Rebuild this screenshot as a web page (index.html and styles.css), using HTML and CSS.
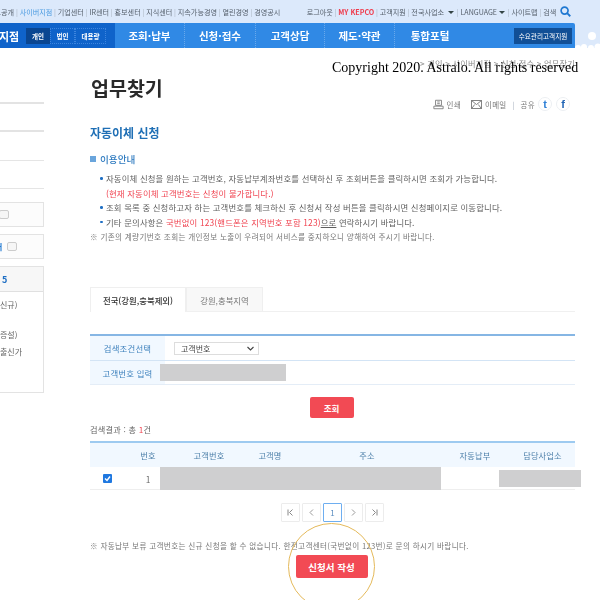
FILE: index.html
```html
<!DOCTYPE html>
<html lang="ko">
<head>
<meta charset="utf-8">
<title>업무찾기</title>
<link rel="stylesheet" href="styles.css">
</head>
<body>
<div class="page">
  <header class="topbar">
    <div class="toplinks left">
      <span>정보공개</span><i>|</i><span class="cur">사이버지점</span><i>|</i><span>기업센터</span><i>|</i><span>IR센터</span><i>|</i><span>홍보센터</span><i>|</i><span>지식센터</span><i>|</i><span>지속가능경영</span><i>|</i><span>열린경영</span><i>|</i><span>경영공시</span>
    </div>
    <div class="toplinks right">
      <span>로그아웃</span><i>|</i><span class="my">MY KEPCO</span><i>|</i><span>고객지원</span><i>|</i><span>전국사업소 <b class="caret"></b></span><i>|</i><span>LANGUAGE<b class="caret"></b></span><i>|</i><span>사이트맵</span><i>|</i><span>검색</span>
      <svg class="search" viewBox="0 0 12 12" width="11" height="11"><circle cx="5" cy="5" r="3.8" fill="none" stroke="#1f78d1" stroke-width="1.8"/><path d="M7.8 7.8L11.2 11.2" stroke="#1f78d1" stroke-width="2"/></svg>
    </div>
  </header>

  <nav class="navrow">
    <div class="navbar">
      <div class="navside">
        <strong class="branch">지점</strong>
        <div class="seg"><span class="on">개인</span><span>법인</span><span class="wide">대용량</span></div>
      </div>
      <a class="navitem w70">조회·납부</a>
      <a class="navitem w71">신청·접수</a>
      <a class="navitem w69">고객상담</a>
      <a class="navitem w70">제도·약관</a>
      <a class="navitem w70 last">통합포털</a>
      <span class="support">수요관리고객지원</span>
    </div>
    <svg class="cloud" width="25" height="25" viewBox="0 0 25 25"><circle cx="17" cy="13" r="4" fill="#fff"/><circle cx="3" cy="25" r="3" fill="#fff"/><circle cx="9" cy="24" r="3" fill="#fff"/><circle cx="16" cy="25" r="3" fill="#fff"/><circle cx="23" cy="24" r="3.5" fill="#fff"/></svg>
  </nav>

  <div class="body">
    <aside class="side">
      <div class="srow first"></div>
      <div class="srow"></div>
      <div class="srow"></div>
      <div class="srow"></div>
      <div class="sbox"><span class="chk"></span></div>
      <div class="sbox"><em>터</em><span class="chk"></span></div>
      <div class="smenu">
        <div class="shead">5</div>
        <p class="m1">신규)</p>
        <p class="m2">증설)</p>
        <p class="m3">출신가</p>
      </div>
    </aside>

    <main class="main">
      <div class="crumbs">&gt; 개인 &gt; 사이버지점 &gt; 신청·접수 &gt; 업무찾기</div>
      <h1>업무찾기</h1>
      <div class="tools">
        <svg width="11" height="11" viewBox="0 0 13 12"><path d="M3 1h7v6H3zM1 8h11v3H1zM5 3h3M5 5h3" fill="none" stroke="#777"/></svg><span class="tt">인쇄</span>
        <svg class="t2" width="11" height="9" viewBox="0 0 12 10"><rect x=".5" y=".5" width="11" height="9" fill="none" stroke="#777"/><path d="M1 1l5 4 5-4M1 9l3-4M11 9L8 5" fill="none" stroke="#777"/></svg><span class="tt">이메일</span>
        <i>|</i><span class="tt">공유</span>
        <span class="sns tw">t</span><span class="sns fb">f</span>
      </div>
      <h2>자동이체 신청</h2>
      <h3><b class="sq"></b>이용안내</h3>
      <ul class="guide">
        <li>자동이체 신청을 원하는 고객번호, 자동납부계좌번호를 선택하신 후 조회버튼을 클릭하시면 조회가 가능합니다.<br><span class="red">(현재 자동이체 고객번호는 신청이 불가합니다.)</span></li>
        <li>조회 목록 중 신청하고자 하는 고객번호를 체크하신 후 신청서 작성 버튼을 클릭하시면 신청페이지로 이동합니다.</li>
        <li>기타 문의사항은 <span class="red">국번없이 123(핸드폰은 지역번호 포함 123)</span><u>으로</u> 연락하시기 바랍니다.</li>
      </ul>
      <p class="note">※ 기존의 계량기번호 조회는 개인정보 노출이 우려되어 서비스를 중지하오니 양해하여 주시기 바랍니다.</p>

      <div class="tabs">
        <span class="tab active">전국(강원,충북제외)</span>
        <span class="tab">강원,충북지역</span>
      </div>

      <div class="form">
        <div class="frow">
          <label>검색조건선택</label>
          <div class="fval"><span class="select">고객번호<svg width="7" height="5" viewBox="0 0 7 5"><path d="M.5 1l3 3 3-3" fill="none" stroke="#444" stroke-width="1.1"/></svg></span></div>
        </div>
        <div class="frow">
          <label>고객번호 입력</label>
          <div class="fval"><span class="mask input"></span></div>
        </div>
      </div>

      <div class="center btn1"><span class="btn small">조회</span></div>

      <p class="count">검색결과 : 총 <span class="red">1</span>건</p>

      <div class="grid ghead">
        <span></span><span>번호</span><span>고객번호</span><span>고객명</span><span>주소</span><span>자동납부</span><span>담당사업소</span>
      </div>
      <div class="grid grow">
        <span class="cb"><svg width="9" height="9" viewBox="0 0 9 9"><rect width="9" height="9" rx="1" fill="#1f78e0"/><path d="M2 4.5l2 2 3-4" fill="none" stroke="#fff" stroke-width="1.4"/></svg></span>
        <span class="no">1</span>
        <span class="mask span3"></span>
        <span></span>
        <span class="mask office"></span>
      </div>

      <div class="pager">
        <span><svg width="7" height="7" viewBox="0 0 7 7"><path d="M1 .5v6M5.5 .5L2.5 3.5l3 3" fill="none" stroke="#888"/></svg></span>
        <span><svg width="5" height="7" viewBox="0 0 5 7"><path d="M4 .5L1 3.5l3 3" fill="none" stroke="#999"/></svg></span>
        <span class="cur">1</span>
        <span><svg width="5" height="7" viewBox="0 0 5 7"><path d="M1 .5l3 3-3 3" fill="none" stroke="#999"/></svg></span>
        <span><svg width="7" height="7" viewBox="0 0 7 7"><path d="M6 .5v6M1.5 .5l3 3-3 3" fill="none" stroke="#888"/></svg></span>
      </div>

      <p class="note n2">※ 자동납부 보류 고객번호는 신규 신청을 할 수 없습니다. 한전고객센터(국번없이 123번)로 문의 하시기 바랍니다.</p>

      <div class="center btn2"><span class="btn big">신청서 작성</span></div>
      <div class="ring"></div>
    </main>
  </div>

  <div class="copyright">Copyright 2020. Astralo. All rights reserved</div>
</div>
</body>
</html>
```
FILE: styles.css
```css
* { box-sizing: border-box; }
html, body { margin: 0; padding: 0; width: 600px; height: 600px; overflow: hidden; background: #fff; }
.page {
  position: relative; width: 600px; height: 600px; overflow: hidden;
  font-family: "Noto Sans CJK KR", "Noto Sans", sans-serif; color: #555;
  filter: blur(.35px);
}
i { font-style: normal; color: #a9b3c0; }
p, h1, h2, h3, ul { margin: 0; padding: 0; }

.topbar {
  height: 23px; background: #dce9fb; display: flex; justify-content: space-between; align-items: center;
  font-size: 7.1px; color: #56606c; white-space: nowrap;
}
.toplinks { display: flex; align-items: center; gap: 1.8px; }
.toplinks.left { margin-left: -12px; word-spacing: 0; }
.toplinks.left span:last-child { margin-right: 2px; }
.toplinks.right { margin-right: 29px; }
.toplinks .cur { color: #4a9ae0; }
.toplinks .my { color: #ef3b4c; font-weight: 700; }
.caret { display: inline-block; width: 0; height: 0; border: 3px solid transparent; border-top: 3.5px solid #344; border-bottom: 0; margin: 0 1px 1px 2px; }
.search { margin-left: 2px; }

.navrow { height: 25px; display: flex; background: #dce9fb; }
.navbar { width: 575px; height: 25px; flex-shrink: 0; background: #3089e5; display: flex; align-items: center; color: #fff; border-radius: 0 2px 0 0; }
.navside { width: 115px; height: 100%; background: #0f63ca; display: flex; align-items: center; flex-shrink: 0; overflow: hidden; }
.branch { font-size: 11px; width: 27px; margin-left: -1px; font-weight: 700; flex-shrink: 0; }
.seg { display: flex; height: 16px; font-size: 6.5px; font-weight: 700; }
.seg span { width: 25px; display: flex; align-items: center; justify-content: center; border: 1px dotted #3d85de; }
.seg .on { background: #0a4691; width: 24px; border-color: #0a4691; }
.seg .wide { width: 31px; }
.navitem { height: 100%; display: flex; align-items: center; justify-content: center; font-size: 10.5px; font-weight: 700; border-right: 1px dotted #69a9ec; }
.navitem.last { border-right: 0; }
.w70 { width: 70px; } .w71 { width: 71px; } .w69 { width: 69px; }
.support { width: 58px; height: 16px; background: #114f96; margin-left: 49px; font-size: 6.6px; display: flex; align-items: center; justify-content: center; white-space: nowrap; }
.cloud { flex-shrink: 0; }

.body { display: flex; height: 552px; }
.side { width: 44px; flex-shrink: 0; margin-right: 46px; color: #555; }
.srow { height: 28.5px; border-bottom: 1px solid #e5e5e5; }
.srow.first { height: 0; margin-top: 54px; border-bottom: 2px solid #e3e3e3; }
.srow:nth-child(2) { border-bottom: 2px solid #e3e3e3; height: 28px; }
.sbox { height: 25px; border: 1px solid #e3e3e3; border-left: 0; background: #fcfcfc; margin-bottom: 7px; display: flex; align-items: center; gap: 5px; }
.srow + .sbox { margin-top: 13px; }
.sbox em { font-style: normal; color: #1f78d1; font-size: 8px; font-weight: 700; margin-left: -5px; }
.sbox .chk { width: 10px; height: 9px; border: 1px solid #ccc; border-radius: 2px; background: #f6f6f6; }
.sbox > .chk:first-child { margin-left: -1px; }
.smenu { height: 127px; border: 1px solid #e3e3e3; border-left: 0; overflow: hidden; }
.shead { height: 25px; background: #f7f7f7; border-bottom: 1px solid #e0e0e0; color: #1f6fc4; font-weight: 700; font-size: 9px; display: flex; align-items: center; padding-left: 2px; }
.smenu p { font-size: 8px; line-height: 14px; color: #666; white-space: nowrap; }
.m1 { margin-top: 6px; }
.m2 { margin-top: 16px; }
.m3 { margin-top: 3px; }

.main { position: relative; width: 485px; flex-shrink: 0; font-size: 8.5px; }
.crumbs { position: absolute; right: 0; top: 9px; font-size: 8.2px; color: #8a8a8a; white-space: nowrap; letter-spacing: .2px; }
h1 { font-size: 19.5px; line-height: 30px; font-weight: 700; color: #2a2a2a; margin-top: 25px; padding-left: 1px; }
.tools { display: flex; justify-content: flex-end; align-items: center; gap: 3px; height: 16px; margin-top: -7px; font-size: 7.5px; color: #777; padding-right: 5px; }
.tools .tt { letter-spacing: .3px; }
.tools .t2 { margin-left: 7px; }
.tools i { margin: 0 3px; }
.sns { width: 14px; height: 14px; border-radius: 50%; border: 1px solid #eceff2; display: flex; align-items: center; justify-content: center; font: 700 11px "Liberation Sans", sans-serif; color: #2d7fd6; }
.tools .fb { color: #2366b5; margin-left: 1px; }
h2 { font-size: 12px; line-height: 16px; font-weight: 700; color: #1f6fb5; margin-top: 13px; }
h3 { font-size: 9.6px; line-height: 14px; font-weight: 500; color: #2f7bc0; margin-top: 11px; display: flex; align-items: center; }
.sq { width: 6px; height: 6px; background: #6aa5dc; margin-right: 4px; }
.guide { list-style: none; margin-top: 5px; padding-left: 16px; line-height: 14.5px; font-size: 8.4px; letter-spacing: .15px; white-space: nowrap; color: #5e5e5e; }
.guide li { position: relative; }
.guide li::before { content: ""; position: absolute; left: -6px; top: 6px; width: 2.5px; height: 2.5px; background: #1f6fc4; border-radius: 50%; }
.red { color: #f0424f; }
.note { font-size: 7.6px; line-height: 14px; letter-spacing: .33px; color: #777; white-space: nowrap; margin-top: 1px; }

.tabs { display: flex; margin-top: 43px; height: 25px; align-items: stretch; border-bottom: 1px solid #f0f0f0; }
.tab { width: 77px; display: flex; align-items: center; justify-content: center; background: #f8f8f8; border: 1px solid #efefef; border-bottom: 0; font-size: 8.4px; color: #777; }
.tab.active { width: 96px; background: #fff; font-weight: 500; color: #333; margin-bottom: -1px; }

.form { margin-top: 22px; border-top: 2px solid #86b6e4; border-bottom: 1px solid #e4edf7; }
.frow { display: flex; height: 24px; }
.frow + .frow { border-top: 1px solid #d3e4f5; }
.frow label { width: 75px; background: #f1f8ff; display: flex; align-items: center; justify-content: center; font-size: 8.4px; color: #3d80bd; letter-spacing: .2px; }
.fval { flex: 1; display: flex; align-items: center; }
.select { width: 85px; height: 13px; margin-left: 9px; border: 1px solid #ddd; display: flex; align-items: center; justify-content: space-between; padding: 0 4px 0 6px; font-size: 8px; color: #444; }
.mask { background: #cfcfd0; display: block; }
.input { width: 126px; height: 17px; margin-left: -5px; }

.center { display: flex; justify-content: center; position: relative; z-index: 1; }
.btn { background: #f24a54; border-radius: 2px; color: #fff; display: flex; align-items: center; justify-content: center; font-weight: 700; }
.btn.small { width: 44px; height: 21px; font-size: 8.5px; }
.btn.big { width: 72px; height: 23px; font-size: 9.5px; }
.btn1 { margin-top: 12px; padding-right: 2px; }
.btn2 { margin-top: 2px; padding-right: 2px; }

.count { margin-top: 4px; font-size: 8.2px; line-height: 14px; color: #666; letter-spacing: .2px; }
.grid { display: grid; grid-template-columns: 34px 48px 74px 48px 146px 70px 65px; }
.ghead { margin-top: 5px; height: 26px; background: #f1f8ff; border-top: 2px solid #9dcaf0; font-size: 8.2px; color: #4a7da8; align-items: center; text-align: center; letter-spacing: .2px; }
.grow { height: 23px; border-bottom: 1px solid #eeeeee; align-items: center; font-size: 8.4px; color: #666; }
.cb { display: flex; justify-content: center; }
.no { text-align: center; }
.span3 { grid-column: 3 / 6; height: 23px; width: 281px; margin-left: -12px; }
.office { width: 82px; height: 17px; margin-left: -11px; }

.pager { display: flex; justify-content: center; gap: 2px; margin-top: 13px; height: 19px; }
.pager span { width: 19px; height: 19px; border: 1px solid #ececec; border-radius: 1px; display: flex; align-items: center; justify-content: center; font-size: 8px; color: #888; }
.pager .cur { border-color: #6eaef0; color: #5b8dc0; }

.n2 { margin-top: 17px; }
.ring { position: absolute; left: 198px; top: 475px; width: 87px; height: 87px; border-radius: 50%; border: 1px solid #e4b95a; }

.copyright {
  position: absolute; left: 332px; top: 58px; font-family: "Liberation Serif", serif; font-size: 14px; line-height: 20px; color: #000; white-space: nowrap;
}
```
